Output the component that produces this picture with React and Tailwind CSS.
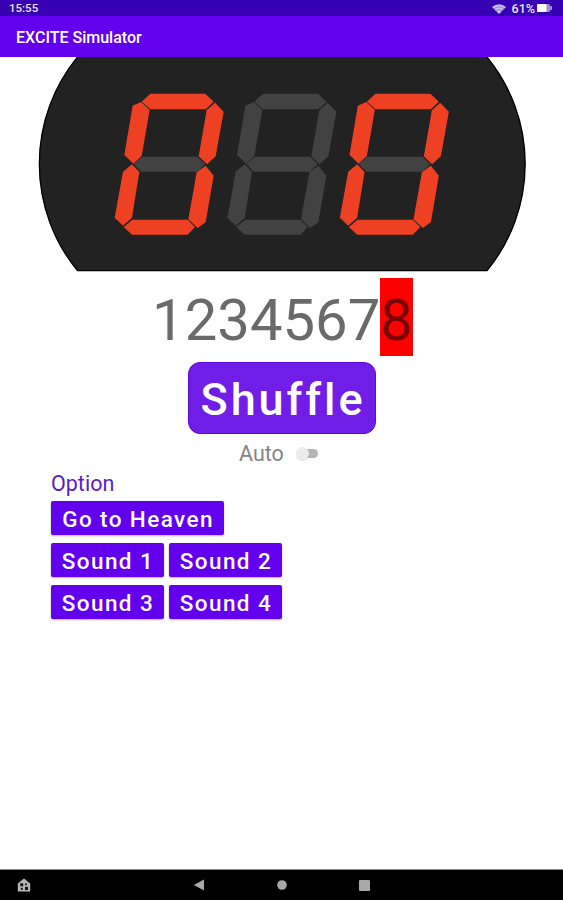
const SEGMENTS = {
    a: "335,140 361,116 526,116 551,140 527,163 361,163",
    b: "555,143 581,170 557,304 531,328 506,304 530,166",
    c: "527,332 551,362 527,502 503,519 475,493 500,352",
    d: "281,516 307,494 473,494 495,516 473,539 306,539",
    e: "306,328 328,351 306,488 279,512 254,488 279,350",
    f: "333,141 359,165 335,303 310,326 283,299 308,152",
    g: "311,327 336,305 502,305 525,327 502,350 333,350",
}

const Digit = ({ x, lit = "" }) => (
    <g transform={`translate(${x} -2) scale(0.33333)`}>
        {Object.entries(SEGMENTS).map(([name, points]) => (
            <polygon key={name} points={points} fill={lit.includes(name) ? "#ee4023" : "#424242"} />
        ))}
    </g>
)

const Display = () => (
    <svg className="block h-[215px] w-full" viewBox="0 0 563 215">
        <path d="M77.5 0H487A168.5 168.5 0 0 1 487 214H77.5A168.5 168.5 0 0 1 77.5 0Z" fill="#222" />
        <path d="M77.5 0A168.5 168.5 0 0 0 77.5 213.6H487A168.5 168.5 0 0 0 487 0" fill="none" stroke="#000" strokeWidth="1.3" />
        <Digit x={30} lit="abcdef" />
        <Digit x={142.7} />
        <Digit x={255.2} lit="abcdef" />
    </svg>
)

const OptionButton = ({ children, className = "" }) => (
    <button
        type="button"
        className={`h-[34px] rounded-[2px] bg-[#6200ee] pt-[3px] pl-px text-center text-[22.5px] leading-[31px] font-medium tracking-[1.4px] whitespace-nowrap text-white shadow-[0_1px_2px_rgba(0,0,0,0.3)] ${className}`}
    >
        {children}
    </button>
)

const StatusBar = () => (
    <div className="flex h-4 items-center bg-[#3700b3] pr-[11px] pl-[9px] text-[11.5px] font-medium text-white/90">
        <span className="mt-[2px]">15:55</span>
        <svg className="mt-px ml-auto h-[10px] w-[14px]" viewBox="0 0 14 10">
            <path d="M0 3Q7 -2.5 14 3L7 10Z" fill="#c9bdf0" />
            <path d="M2 4.7Q7 1 12 4.7M4 6.7Q7 4.4 10 6.7" fill="none" stroke="#6b4fc4" strokeWidth="0.6" />
        </svg>
        <span className="mt-[2px] ml-[6px] text-[12.5px]">61%</span>
        <svg className="ml-[2px] h-2 w-[15px]" viewBox="0 0 15 8">
            <rect width="13" height="8" rx="1.5" fill="#a18bdc" />
            <rect width="9.5" height="8" rx="1" fill="#fff" />
            <rect x="13" y="2" width="2" height="4" fill="#a18bdc" />
        </svg>
    </div>
)

const NavBar = () => (
    <div className="grid h-[31px] grid-cols-[190px_83px_82px_1fr] items-center border-t border-[#8a8a8a] bg-black">
        <svg className="ml-[17px] h-[14px] w-[14px]" viewBox="0 0 14 14">
            <path d="M0.8 5.5L7 0.5L13.2 5.5V13.5H0.8Z" fill="#b5b5b5" />
            <rect x="3.2" y="5.3" width="3" height="3" rx="0.5" fill="#111" />
            <circle cx="9" cy="6.2" r="1" fill="#111" />
            <rect x="3.8" y="9.8" width="2" height="2" fill="#111" />
            <rect x="8" y="8.8" width="3" height="3.2" rx="0.5" fill="#111" />
        </svg>
        <svg className="ml-[3px] h-3 w-3" viewBox="0 0 12 12">
            <path d="M0.8 6L11 0.6V11.4Z" fill="#a8a8a8" />
        </svg>
        <svg className="ml-[4px] h-[10px] w-[10px]" viewBox="0 0 10 10">
            <circle cx="5" cy="5" r="4.8" fill="#a8a8a8" />
        </svg>
        <svg className="ml-[4px] h-[11px] w-[11px]" viewBox="0 0 11 11">
            <rect width="11" height="11" rx="1" fill="#a8a8a8" />
        </svg>
    </div>
)

export default function App() {
    return (
        <div className="flex h-[900px] w-full flex-col overflow-hidden bg-white font-['Roboto',sans-serif]">
            <StatusBar />
            <header className="flex h-[41px] items-center bg-[#6200ee] pt-[2px] pl-4 text-[16px] font-medium text-white">
                EXCITE Simulator
            </header>

            <main className="flex flex-1 flex-col">
                <Display />

                <div className="mt-[6px] flex h-[78px] justify-center pl-[2px] text-[58px] leading-[84px] text-[#6a6a6a]">
                    <span>1234567</span>
                    <span className="h-[78px] bg-[#ff0000] text-[#7a0000]">8</span>
                </div>

                <button
                    type="button"
                    className="mt-[6px] h-[72px] w-[188px] self-center rounded-[12px] border border-[#5a0ad8] bg-[#711de8] pt-[3px] pl-[3px] text-[45px] leading-none font-medium tracking-[2.9px] text-white"
                >
                    Shuffle
                </button>

                <div className="mt-[6px] flex h-7 items-center pl-[239px] text-[21.5px] text-[#858585]">
                    <span className="mt-px">Auto</span>
                    <span className="-mt-px ml-[12px] flex h-[9px] w-[22px] items-center rounded-full bg-gradient-to-r from-transparent from-40% to-[#b5b5b5] to-40%">
                        <span className="h-[13px] w-[13px] shrink-0 rounded-full bg-[#ececec] shadow-[0_1px_1px_rgba(0,0,0,0.12)]" />
                    </span>
                </div>

                <section className="flex flex-col gap-2 pl-[51px]">
                    <div className="mt-[3px] -mb-[7px] h-[29px] text-[21.5px] leading-[26px] text-[#5b1cc4]">Option</div>
                    <OptionButton className="w-[173px]">Go to Heaven</OptionButton>
                    <div className="flex gap-[5px]">
                        <OptionButton className="w-[113px]">Sound 1</OptionButton>
                        <OptionButton className="w-[113px]">Sound 2</OptionButton>
                    </div>
                    <div className="flex gap-[5px]">
                        <OptionButton className="w-[113px]">Sound 3</OptionButton>
                        <OptionButton className="w-[113px]">Sound 4</OptionButton>
                    </div>
                </section>
            </main>

            <NavBar />
        </div>
    )
}
